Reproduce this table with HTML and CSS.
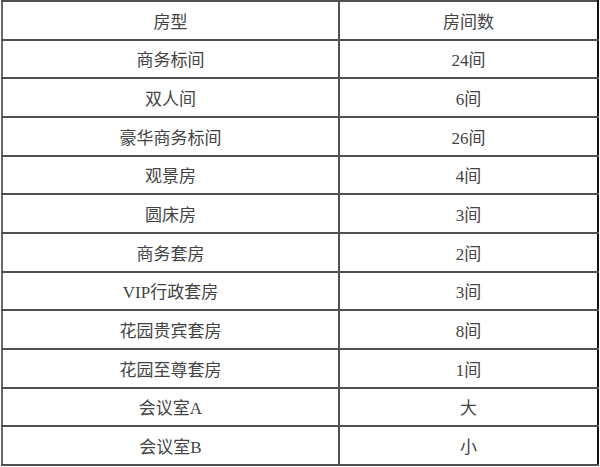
FILE: index.html
```html
<!DOCTYPE html>
<html>
<head>
<meta charset="utf-8">
<link rel="stylesheet" href="styles.css">
</head>
<body>
<table class="rooms">
  <tr><td class="c1">房型</td><td class="c2">房间数</td></tr>
  <tr><td class="c1">商务标间</td><td class="c2">24间</td></tr>
  <tr><td class="c1">双人间</td><td class="c2">6间</td></tr>
  <tr><td class="c1">豪华商务标间</td><td class="c2">26间</td></tr>
  <tr><td class="c1">观景房</td><td class="c2">4间</td></tr>
  <tr><td class="c1">圆床房</td><td class="c2">3间</td></tr>
  <tr><td class="c1">商务套房</td><td class="c2">2间</td></tr>
  <tr><td class="c1">VIP行政套房</td><td class="c2">3间</td></tr>
  <tr><td class="c1">花园贵宾套房</td><td class="c2">8间</td></tr>
  <tr><td class="c1">花园至尊套房</td><td class="c2">1间</td></tr>
  <tr><td class="c1">会议室A</td><td class="c2">大</td></tr>
  <tr><td class="c1">会议室B</td><td class="c2">小</td></tr>
</table>
</body>
</html>
```
FILE: styles.css
```css
html, body {
  margin: 0;
  padding: 0;
  background: #ffffff;
}
body {
  padding: 0 1px 0 1px;
}
.rooms {
  border-collapse: collapse;
  width: 598px;
  height: 466px;
  table-layout: fixed;
  font-family: "Liberation Serif", "Noto Sans CJK SC", serif;
  font-size: 17px;
  color: #444444;
}
.rooms td {
  border: 2px solid #505050;
  text-align: center;
  vertical-align: middle;
  padding: 0;
  height: 36px;
}
.rooms .c1 {
  width: 335px;
}
.rooms tr td:first-child {
  border-left-color: #6a6a6a;
}
.rooms tr td:last-child {
  border-right-color: #111;
}
```
